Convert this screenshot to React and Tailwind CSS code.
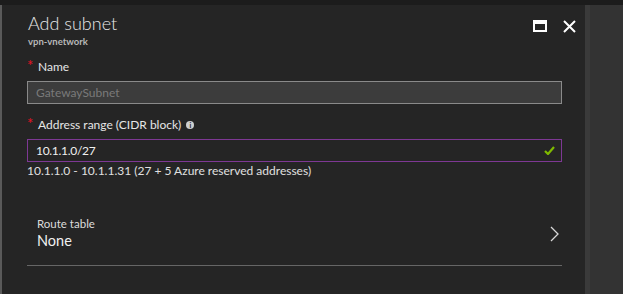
import React from "react";

const font = { fontFamily: '"Segoe UI", Lato, "Open Sans", sans-serif' };

const Label = ({ children, info }) => (
  <div className="flex items-center h-[16px] text-[12px] text-[#e6e6e6] leading-none">
    <span className="text-[#e81123] text-[15px] w-[11px] -mt-[4px]">*</span>
    <span>{children}</span>
    {info && (
      <span className="ml-[5px] w-[8px] h-[8px] rounded-full bg-[#cfcfcf] text-[#252525] text-[7px] font-bold flex items-center justify-center leading-none">
        i
      </span>
    )}
  </div>
);

export default function App() {
  return (
    <div className="w-[623px] h-[294px] bg-[#333333] flex flex-col overflow-hidden" style={font}>
      <div className="h-[5px] bg-[#1c1c1c]" />
      <div className="flex flex-1">
        <div className="w-[2px] bg-[#5a5a5a]" />
        <div className="w-[583px] bg-[#252525] pl-[25px] pr-[23px]">
          {/* header */}
          <div className="flex justify-between pt-[5px] -mr-[14px]">
            <div>
              <div className="text-[18px] font-light text-[#e8e8e8] leading-[26px] pl-[1px]">Add subnet</div>
              <div className="text-[9.5px] font-bold text-[#b8b8b8] leading-[12px] pl-[1px]">vpn-vnetwork</div>
            </div>
            <div className="flex items-start gap-[16px] pt-[10px]">
              <div className="w-[14px] h-[12px] border-white border-x-[2px] border-b-[2px] border-t-[4px]" />
              <svg width="13" height="13" viewBox="0 0 13 13">
                <path d="M1 1 L12 12 M12 1 L1 12" stroke="white" strokeWidth="2" />
              </svg>
            </div>
          </div>

          {/* name */}
          <div className="mt-[11px]">
            <Label>Name</Label>
            <div className="mt-[6px] h-[23px] border border-[#8a8a8a] bg-[#3c3c3c] flex items-center pl-[8px] text-[12px] text-[#7a7a7a]">
              GatewaySubnet
            </div>
          </div>

          {/* address range */}
          <div className="mt-[13px]">
            <Label info>Address range (CIDR block)</Label>
            <div className="mt-[6px] h-[23px] border border-[#7e3894] flex items-center justify-between pl-[8px] pr-[6px] text-[12px] tracking-[-0.3px] text-[#f0f0f0]">
              <span>10.1.1.0/27</span>
              <svg width="11" height="9" viewBox="0 0 11 9">
                <path d="M1 5 L4 8 L10 1" stroke="#7fba00" strokeWidth="2.2" fill="none" />
              </svg>
            </div>
            <div className="mt-0 text-[12px] text-[#e0e0e0] leading-[18px]">
              10.1.1.0 - 10.1.1.31 (27 + 5 Azure reserved addresses)
            </div>
          </div>

          {/* route table */}
          <div className="mt-[37px] border-b border-[#666666] pb-[14px] pl-[10px] pr-[3px] flex items-center justify-between">
            <div>
              <div className="text-[11.5px] text-[#dcdcdc] leading-[14px]">Route table</div>
              <div className="text-[14.5px] text-[#f0f0f0] leading-[20px]">None</div>
            </div>
            <svg width="9" height="16" viewBox="0 0 9 16">
              <path d="M1 1 L8 8 L1 15" stroke="#d8d8d8" strokeWidth="1.3" fill="none" />
            </svg>
          </div>
        </div>
        <div className="w-[5px] bg-[#3a3a3a]" />
        <div className="flex-1 bg-[#333333]" />
      </div>
    </div>
  );
}
